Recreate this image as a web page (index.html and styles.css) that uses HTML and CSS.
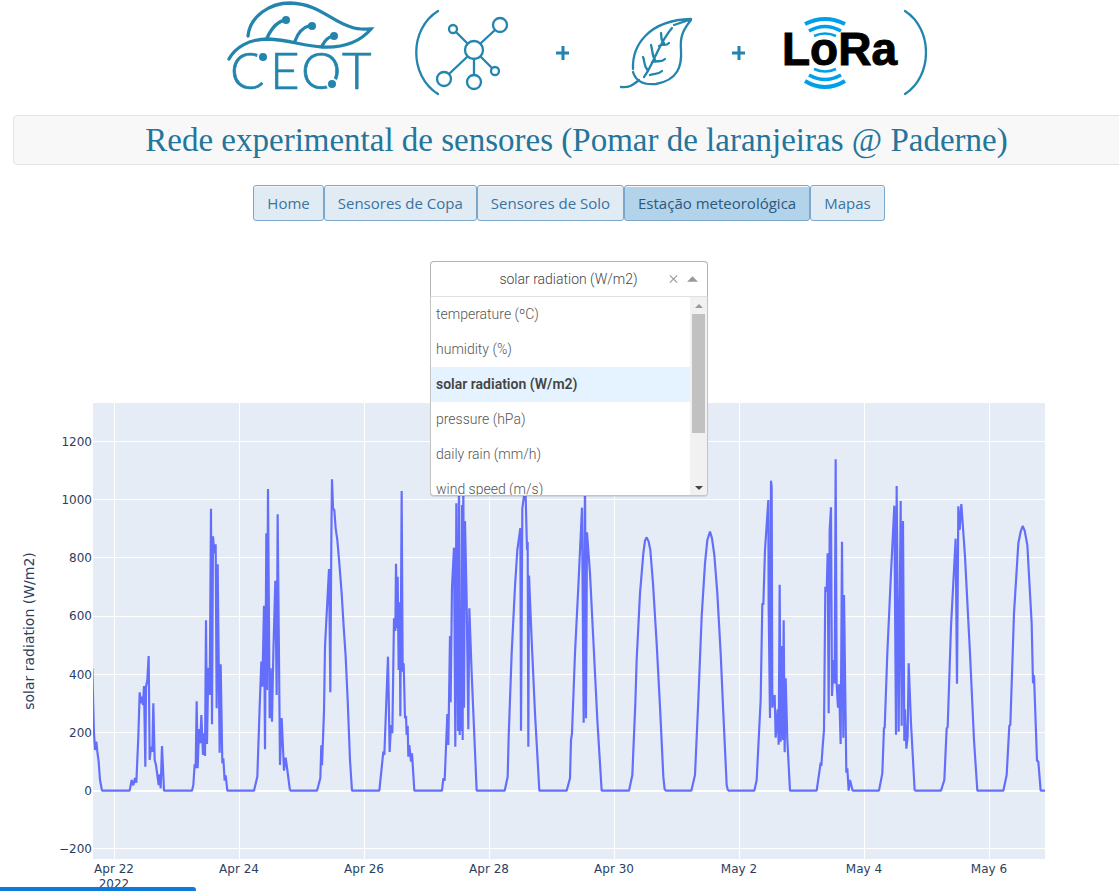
FILE: index.html
```html
<!DOCTYPE html>
<html lang="pt">
<head>
<meta charset="utf-8">
<title>Rede experimental de sensores</title>
<meta name="viewport" content="width=device-width, initial-scale=1">
<link rel="stylesheet" href="styles.css">
</head>
<body>
<header class="masthead">
  <svg class="logos" viewBox="227 0 700 104" role="img" aria-label="CEOT (sensores + folha + LoRa)">
    <g class="logo-line ceot-leaf">
      <path d="M248 36C250 16 270 3 290 3C320 4 330 21 351 27C359 30 365 29 371 29C359 43 342 48 322 47C303 46 290 40 268 39C248 39 235 48 229 59"/>
      <path d="M267 38C272 27 278 21 286 20M295 41C298 32 304 27 311 25M322 46C325 40 328 37 333 36"/>
    </g>
    <g class="logo-dot">
      <circle cx="286" cy="20" r="4"/><circle cx="312" cy="26" r="4"/><circle cx="334" cy="36" r="4"/>
    </g>
    <text class="ceot-name" x="230 270 301 342" y="89">CEOT</text>
    <g class="logo-halo"><circle cx="263" cy="57" r="5"/><circle cx="332" cy="84" r="5"/></g>
    <g class="logo-dot"><circle cx="263" cy="57" r="4"/><circle cx="332" cy="84" r="4"/></g>
    <g class="logo-line">
      <path d="M438 11C409 29 409 76 438 94M905 11C933 29 933 76 905 94"/>
      <circle cx="474" cy="50" r="9"/><circle cx="453" cy="29" r="4"/><circle cx="500" cy="25" r="7"/>
      <circle cx="444" cy="79" r="7"/><circle cx="474" cy="82" r="7"/><circle cx="495" cy="71" r="4"/>
      <path d="M456 32L467 43M481 43L495 30M467 57L449 74M474 59V75M481 57L492 68"/>
      <path d="M621 87C630 88 634 84 639 80M633 69C632 46 648 20 691 19M633 72C636 82 645 85 656 84C678 80 682 66 681 50C680 38 682 31 691 20M674 25L689 20"/>
      <path d="M644 77C654 64 658 44 672 28M643 57C645 61 643 65 648 71M651 45C653 52 652 56 655 60M661 33C662 37 660 40 664 43M650 75C655 73 658 75 662 71M652 62C658 60 661 63 665 59M659 46C662 43 665 47 669 43"/>
    </g>
    <path class="logo-plus" d="M556 53H569M563 46V60M732 53H745M739 46V60"/>
    <g class="wave">
      <path class="wave-outer" d="M805 24Q825 14 845 24M805 81Q825 93 845 81"/>
      <path class="wave-middle" d="M809 31Q825 22 841 31M809 75Q825 84 841 75"/>
      <path class="wave-inner" d="M814 36Q825 31 836 36M814 69Q825 74 836 69"/>
    </g>
    <text class="lora" x="782" y="65">LoRa</text>
  </svg>
  <h1 class="title">Rede experimental de sensores (Pomar de laranjeiras @ Paderne)</h1>
</header>

<main class="content">
  <nav class="tabs">
    <a class="tab" href="#home">Home</a>
    <a class="tab" href="#copa">Sensores de Copa</a>
    <a class="tab" href="#solo">Sensores de Solo</a>
    <a class="tab tab-active" href="#estacao" aria-current="page">Estação meteorológica</a>
    <a class="tab" href="#mapas">Mapas</a>
  </nav>

  <div class="picker">
    <div class="picker-control">
      <input class="picker-value" type="text" role="combobox" aria-label="Variável" aria-expanded="true" aria-controls="variables" value="solar radiation (W/m2)" readonly>
      <button class="picker-button" type="button" aria-label="Limpar">
        <svg class="icon" viewBox="0 0 10 10"><path class="cross" d="M1 1L9 9M9 1L1 9"/></svg>
      </button>
      <button class="picker-button" type="button" aria-label="Fechar lista">
        <svg class="icon" viewBox="0 0 10 10"><path class="arrow" d="M-1 8L5 2L11 8Z"/></svg>
      </button>
    </div>
    <div class="picker-menu">
      <ul class="options" id="variables" role="listbox" aria-label="Variável">
        <li class="option" role="option">temperature (ºC)</li>
        <li class="option" role="option">humidity (%)</li>
        <li class="option option-selected" role="option" aria-selected="true">solar radiation (W/m2)</li>
        <li class="option" role="option">pressure (hPa)</li>
        <li class="option" role="option">daily rain (mm/h)</li>
        <li class="option" role="option">wind speed (m/s)</li>
      </ul>
      <div class="scrollbar" aria-hidden="true">
        <svg class="scroll-arrow" viewBox="0 0 17 17"><path class="arrow" d="M5 11L9 7L13 11Z"/></svg>
        <div class="scroll-track"><div class="scroll-thumb"></div></div>
        <svg class="scroll-arrow" viewBox="0 0 17 17"><path class="arrow-dark" d="M5 8L9 12L13 8Z"/></svg>
      </div>
    </div>
  </div>
</main>

<svg class="chart" viewBox="0 340 1119 551" role="img" aria-label="solar radiation (W/m2)">
  <clipPath id="plot-area"><rect x="93" y="403" width="952" height="456"/></clipPath>
  <rect class="plot" x="93" y="403" width="952" height="456"/>
  <path class="grid" d="M114.500 403V859M239.500 403V859M364.500 403V859M489.500 403V859M614.500 403V859M739.500 403V859M864.500 403V859M989.500 403V859M93 441.500H1045M93 499.500H1045M93 557.500H1045M93 616.500H1045M93 674.500H1045M93 732.500H1045M93 848.500H1045"/>
  <path class="grid zero" d="M93 791H1045"/>
  <g class="trace" clip-path="url(#plot-area)">
    <polyline transform="translate(80 440) scale(.33333)" points="37,685 40,810 42,878 45,930 49,905 52,935 56,965 60,1020 66,1052 149,1052 155,1020 160,1036 165,1014 169,1028 175,890 179,757 183,790 186,770 189,795 192,738 196,980 198,740 202,720 206,648 209,960 213,920 217,935 220,790 224,960 228,975 232,1005 236,1035 239,1003 242,1045 246,918 252,1052 336,1052 340,1035 344,973 347,985 350,784 353,985 357,867 361,910 364,825 369,945 372,880 375,948 378,541 381,912 385,683 389,765 393,206 396,853 399,289 403,340 407,313 410,805 413,373 419,938 422,673 427,970 430,955 434,1022 437,1006 442,1052 522,1052 532,1010 539,800 544,665 547,740 552,497 555,928 559,280 561,750 564,147 569,835 572,685 576,845 580,640 586,422 590,765 593,223 600,975 605,834 612,992 617,953 622,990 630,1052"/>
    <polyline transform="translate(290 440) scale(.33333)" points="0,1052 81,1052 91,1015 94,916 96,976 102,815 105,620 117,387 119,560 121,757 124,300 126,118 129,205 133,210 137,265 142,300 148,370 155,460 161,560 167,650 173,780 180,960 186,1052 268,1052 280,935 283,945 294,650 299,936 303,855 307,880 312,535 316,573 318,371 321,565 323,410 326,690 329,487 331,829 335,153 338,695 341,670 345,835 348,828 350,885 353,857 355,950 358,915 363,965 366,940 373,1052 456,1052 460,1015 464,1022 472,822 475,915 480,588 482,787 486,440 492,323 496,920 499,190 504,873 507,100 509,885 512,620 513,873 516,195 518,900 520,100 522,803 525,243 530,480 535,868 538,505 545,700 560,1052 644,1052 653,1010 656,890 665,640 675,440 682,330 691,265"/>
    <polyline transform="translate(510 440) scale(.33333)" points="31,265 33,872 37,205 42,168 47,168 51,330 53,306 55,920 57,407 65,600 75,820 88,1052 170,1052 180,1015 183,900 186,880 195,640 205,440 216,203 221,848 225,100 228,835 231,277 240,400 250,600 262,840 275,1052 357,1052 367,1005 376,790 380,660 390,460 400,340 405,302 410,292 416,305 421,330 429,430 440,610 450,800 460,1010 464,1048 468,1052 544,1052 555,1005 565,780 575,530 585,370 592,300 600,275 606,295 613,345 622,460 632,640 640,820 650,1035 654,1052"/>
    <polyline transform="translate(720 440) scale(.33333)" points="24,1052 103,1052 110,1020 122,780 127,490 130,495 135,330 145,180 146,500 150,834 153,122 155,140 157,803 164,765 167,893 173,808 176,914 179,434 182,905 186,618 189,900 191,541 194,937 197,715 202,900 210,1052 290,1052 302,968 304,978 308,920 312,870 316,440 320,455 323,340 326,820 329,270 333,202 336,768 341,660 344,730 347,58 350,735 354,803 357,733 362,912 366,305 370,893 372,465 379,998 382,985 386,1052 390,1020 398,1052 477,1052 487,1000 492,862 494,865 502,640 512,420 523,197 528,884 530,138 536,875 542,183 545,857 549,243 553,903 555,808 559,926 563,890 566,670 573,850 584,1052"/>
    <polyline transform="translate(870 440) scale(.33333)" points="134,1052 213,1052 223,1020 230,865 233,862 243,560 257,296 261,731 265,199 269,270 274,192 285,350 300,640 312,900 322,1052 400,1052 410,1005 418,857 421,855 432,520 445,310 452,275 458,258 464,272 472,315 485,550 489,730 492,706 501,962 505,965 512,1052 525,1052"/>
  </g>
  <g class="tick tick-y">
    <text x="92" y="446">1200</text><text x="92" y="504">1000</text><text x="92" y="562">800</text><text x="92" y="620">600</text><text x="92" y="679">400</text><text x="92" y="737">200</text><text x="92" y="795">0</text><text x="92" y="853">−200</text>
  </g>
  <g class="tick tick-x">
    <text x="114" y="873">Apr 22</text><text x="114" y="888">2022</text><text x="239" y="873">Apr 24</text><text x="364" y="873">Apr 26</text><text x="489" y="873">Apr 28</text><text x="614" y="873">Apr 30</text><text x="739" y="873">May 2</text><text x="864" y="873">May 4</text><text x="989" y="873">May 6</text>
  </g>
  <text class="axis-title" transform="translate(34 631) rotate(-90)">solar radiation (W/m2)</text>
</svg>
<div class="status-bar"></div>
</body>
</html>
```
FILE: styles.css
```css
* { box-sizing: border-box; }
body {
  margin: 0;
  overflow-x: hidden;
  background: #fff;
  font-family: Roboto, "Liberation Sans", sans-serif;
}
.masthead {
  margin: 0 -21px 0 13px;
  display: flex;
  flex-direction: column;
  align-items: center;
  gap: 11px;
}
.logos { display: block; width: 700px; height: 104px; }
.logo-line { fill: none; stroke: #2385ae; stroke-width: 2.3; stroke-linecap: round; }
.ceot-leaf { stroke-width: 3.3; }
.logo-dot { fill: #2385ae; }
.logo-halo { fill: #fff; stroke: #fff; stroke-width: 2; }
.ceot-name {
  font-family: Lato, sans-serif;
  font-size: 51px;
  font-weight: 300;
  fill: #2385ae;
  stroke: #2385ae;
  stroke-width: .7;
}
.logo-plus { fill: none; stroke: #2385ae; stroke-width: 3; }
.wave { fill: none; stroke: #00a0e9; }
.wave-outer { stroke-width: 4; }
.wave-middle { stroke-width: 3.5; }
.wave-inner { stroke-width: 2.5; }
.lora {
  font-family: "Liberation Sans", Arial, sans-serif;
  font-size: 46px;
  font-weight: 700;
  fill: #000;
  stroke: #000;
  stroke-width: 1;
}
.title {
  align-self: stretch;
  margin: 0;
  padding: 4px;
  border: 1px solid #e3e3e3;
  border-radius: 4px;
  background: #f8f8f8;
  color: #24759b;
  font-family: "Roboto Slab", "Liberation Serif", serif;
  font-size: 33px;
  font-weight: 300;
  line-height: 40px;
  text-align: center;
  white-space: nowrap;
}
.content {
  margin: 20px -6px 0 13px;
  display: flex;
  flex-direction: column;
  align-items: center;
  gap: 40px;
}
.tabs { display: flex; }
.tab {
  padding: 0 13px;
  border: 1px solid #7aa7ca;
  border-radius: 3px;
  background: #e1ebf4;
  color: #3973a2;
  font-family: "Open Sans", "Noto Sans", sans-serif;
  font-size: 15px;
  line-height: 34px;
  text-decoration: none;
  box-shadow: inset 0 1px #f5f9fc;
}
.tab-active { background: #b3d3ea; color: #2b587c; }
.picker { position: relative; width: 278px; }
.picker-control {
  display: flex;
  align-items: center;
  height: 36px;
  padding-right: 5px;
  border: 1px solid #b3b3b3;
  border-bottom-color: #e0e0e0;
  border-radius: 4px 4px 0 0;
  background: #fff;
}
.picker-value {
  flex: 1;
  min-width: 0;
  padding: 0 0 0 42px;
  border: 0;
  outline: 0;
  background: none;
  color: #444;
  font: 300 14px/34px Roboto, sans-serif;
  text-align: center;
}
.picker-button { display: flex; padding: 0 5px; border: 0; background: none; }
.icon { width: 9px; height: 10px; overflow: visible; }
.cross { fill: none; stroke: #999; stroke-width: 1.3; }
.arrow { fill: #999; }
.arrow-dark { fill: #444; }
.picker-menu {
  position: absolute;
  top: 100%;
  left: 0;
  right: 0;
  display: flex;
  height: 199px;
  overflow: hidden;
  border: 1px solid #c4c4c4;
  border-top: 0;
  border-radius: 0 0 4px 4px;
  background: #fff;
  box-shadow: 0 1px 1px rgba(0, 0, 0, .1);
}
.options { flex: 1; margin: 0; padding: 0; list-style: none; }
.option { padding: 0 5px; color: #555; font-size: 14px; font-weight: 300; line-height: 35px; }
.option-selected { background: #e5f2ff; color: #444; font-weight: 600; }
.scrollbar { display: flex; flex-direction: column; width: 17px; background: #f1f1f1; }
.scroll-arrow { width: 17px; height: 17px; }
.scroll-track { flex: 1; padding: 0 2px; }
.scroll-thumb { height: 119px; background: #c1c1c1; }
.chart { display: block; width: 100%; margin-top: 43px; }
.plot { fill: #e5ecf6; }
.grid { fill: none; stroke: #fff; stroke-width: 1; }
.zero { stroke-width: 2; }
.trace { fill: none; stroke: #636efa; stroke-width: 6.5; stroke-linejoin: bevel; }
.tick { fill: #2a3f5f; font-family: Verdana, "DejaVu Sans", sans-serif; font-size: 12px; }
.tick-y { text-anchor: end; }
.tick-x { text-anchor: middle; }
.axis-title { fill: #2a3f5f; font-family: Verdana, "DejaVu Sans", sans-serif; font-size: 14px; text-anchor: middle; }
.status-bar {
  position: fixed;
  bottom: 0;
  left: 0;
  width: 196px;
  height: 4px;
  border-radius: 0 3px 0 0;
  background: #0c7bdc;
}
```
